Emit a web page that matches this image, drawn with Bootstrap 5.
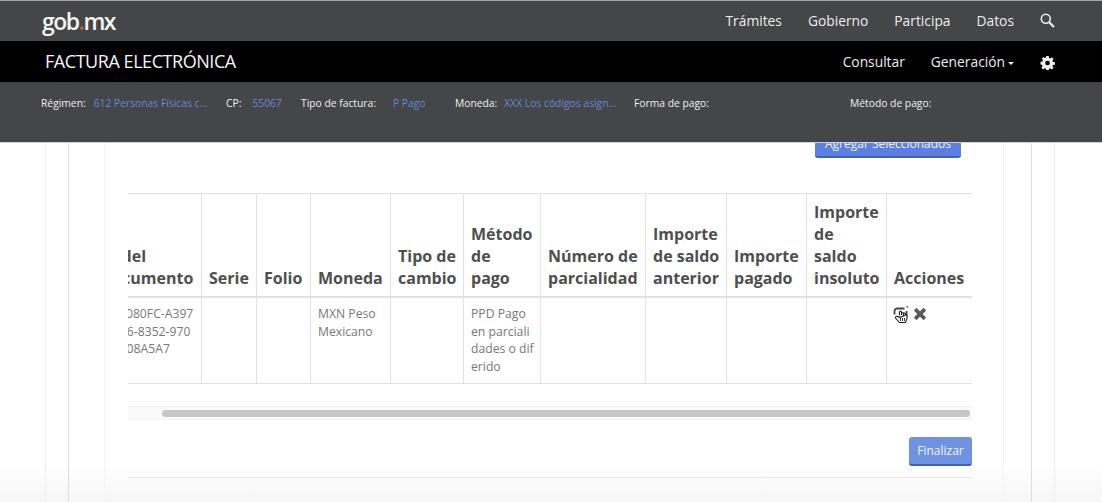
<!DOCTYPE html>
<html lang="es">
<head>
  <meta charset="UTF-8">
  <title>Factura electrónica</title>
  <link href="https://cdn.jsdelivr.net/npm/bootstrap@5.3.3/dist/css/bootstrap.min.css" rel="stylesheet">
  <style>
    html, body { height: 502px; overflow: hidden; }
    body { font-family: "Open Sans", sans-serif; color: #777; background: linear-gradient(#fff 465px, #f6f6f6 502px); }
    a { text-decoration: none; }

    /* cabecera fija */
    .cabecera { position: fixed; top: 0; left: 0; right: 0; z-index: 10; }
    .barra-gob { height: 41px; background: #444648; border-top: 1px solid #a4a4a4; padding: 0 47px 0 42px; }
    .barra-gob .logo-gob { font-size: 23px; font-weight: 600; letter-spacing: -1.5px; color: #f4f4f4; line-height: 40px; }
    .logo-gob i { color: #c8584f; font-style: normal; }
    .barra-gob a, .barra-app a { color: #eee; font-size: 13.8px; }
    .menu-cab { gap: 26px; }
    .icono-busca { margin-top: -2px; }
    .barra-app { height: 41px; background: #000; padding: 0 47px 0 45px; }
    .barra-app a { padding-top: 2px; }
    .titulo-app { color: #f6f6f6; font-size: 18px; letter-spacing: -.45px; }
    .caret-gen { display: inline-block; border-top: 3px solid #eee; border-left: 3px solid transparent; border-right: 3px solid transparent; vertical-align: middle; margin-left: 3px; }
    .barra-datos { height: 61px; background: #444648; border-bottom: 1px solid #cfcfcf; padding: 13px 0 0 41px; font-size: 10.3px; line-height: 16px; }
    .barra-datos b { color: #f0f0f0; font-weight: 400; margin-right: 8px; }
    .barra-datos span { color: #6189dc; }
    .dato-1 { width: 185px; }
    .dato-2 { width: 75px; }
    .dato-3 { width: 154px; }
    .dato-4 { width: 179px; }
    .dato-5 { width: 216px; }
    .dato-3 b { margin-right: 17px; }
    .dato-2 b { margin-right: 11px; }
    .dato-4 b { margin-right: 7px; }

    /* marcos del fondo */
    .marco-1 { margin: 0 47px 0 45px; height: 502px; border-left: 1px solid #eee; border-right: 1px solid #eee; padding: 0 22px; }
    .marco-2 { height: 100%; border-left: 1px solid #ddd; border-right: 1px solid #ddd; padding: 0 0 0 35px; }
    .marco-3 { height: 100%; margin-right: 27px; border-left: 1px solid #f4f4f4; border-right: 1px solid #f4f4f4; padding: 129px 31px 0 23px; }

    .btn-azul { background: #6389e2; color: #f2f5fc; border: 0; border-bottom: 2px solid #3f62b5; border-radius: 3px; font-size: 12px; }
    .btn-azul:hover { background: #5279d8; color: #fff; }
    .btn-agregar { height: 29px; width: 146px; margin-right: 11px; padding: 3px 0 0; background: #5b80e2; }
    .btn-finalizar { height: 29px; width: 63px; padding: 0; background: #6f92e2; }

    .tabla-scroll { overflow: hidden; margin-top: 35px; width: 844px; }
    .tabla-uuid { table-layout: fixed; width: 878px; margin: 0 0 0 -34px; font-size: 12.2px; line-height: 17.6px; color: #777; border-color: #e2e2e2; }
    .tabla-uuid th { font-size: 16px; line-height: 22px; font-weight: 700; color: #4e4e4e; vertical-align: bottom; padding: 7px; border-bottom: 2px solid #e2e2e2; }
    .tabla-uuid td { padding: 7px 7px 8px; color: #777; }
    .tabla-uuid th:nth-child(1) { width: 107px; }
    .tabla-uuid th:nth-child(2) { width: 55px; }
    .tabla-uuid th:nth-child(3) { width: 54px; }
    .tabla-uuid th:nth-child(4) { width: 80px; }
    .tabla-uuid th:nth-child(5) { width: 73px; }
    .tabla-uuid th:nth-child(6) { width: 77px; }
    .tabla-uuid th:nth-child(7) { width: 105px; }
    .tabla-uuid th:nth-child(8) { width: 81px; }
    .tabla-uuid th:nth-child(9) { width: 80px; }
    .tabla-uuid th:nth-child(10) { width: 80px; }
    .tabla-uuid th:nth-child(11) { width: 86px; }
    .tabla-uuid .corta-todo { word-break: break-all; padding-right: 6px; }
    .tabla-uuid .celda-uuid { padding-left: 10px; white-space: nowrap; }
    .sin-corte { white-space: nowrap; }
    .acciones { gap: 3px; margin-left: -1px; }
    .icono-borrar { margin-top: 2px; }

    .riel { width: 844px; height: 14px; margin-top: 22px; background: #fafafa; border-top: 1px solid #f2f2f2; border-bottom: 1px solid #f2f2f2; padding: 3px 2px 0 34px; }
    .riel div { height: 7px; background: #c6c6c6; border-radius: 4px; }
    .pie-tabla { width: 844px; margin-top: 17px; padding-bottom: 11px; border-bottom: 1px solid #e9e9e9; }
  </style>
</head>
<body>
  <header class="cabecera">
    <div class="barra-gob d-flex align-items-center justify-content-between">
      <a class="logo-gob" href="#">gob<i>.</i>mx</a>
      <div class="d-flex align-items-center menu-cab">
        <a href="#">Trámites</a>
        <a href="#">Gobierno</a>
        <a href="#">Participa</a>
        <a href="#">Datos</a>
        <a href="#" aria-label="Buscar" class="icono-busca">
          <svg class="d-block" width="15" height="15" viewBox="0 0 15 15" fill="none" stroke="#eee"><circle cx="5.8" cy="5.8" r="4.5" stroke-width="1.6"/><path d="M9.2 9.2 14 14" stroke-width="2.2"/></svg>
        </a>
      </div>
    </div>
    <div class="barra-app d-flex align-items-center justify-content-between">
      <span class="titulo-app">FACTURA ELECTRÓNICA</span>
      <div class="d-flex align-items-center menu-cab">
        <a href="#">Consultar</a>
        <a href="#">Generación<span class="caret-gen"></span></a>
        <a href="#" aria-label="Ajustes">
          <svg class="d-block" width="15" height="14" viewBox="0 0 16 16" fill="#eee"><path fill-rule="evenodd" d="M6.6 0h2.800l.4 2.300 1.300.6 1.900-1.400 2 2-1.400 1.900.6 1.300 2.300.4v2.800l-2.300.4-.6 1.300 1.400 1.900-2 2-1.900-1.400-1.300.6-.4 2.300H6.600l-.4-2.300-1.300-.6-1.900 1.400-2-2 1.400-1.900-.6-1.300L0 9.400V6.600l2.300-.4.6-1.300L1.500 3l2-2 1.400 1.400 1.300-.6zM8 5.300a2.700 2.700 0 1 0 0 5.400 2.700 2.700 0 0 0 0-5.400z"/></svg>
        </a>
      </div>
    </div>
    <div class="barra-datos d-flex">
      <div class="dato-1"><b>Régimen:</b><span>612 Personas Físicas c...</span></div>
      <div class="dato-2"><b>CP:</b><span>55067</span></div>
      <div class="dato-3"><b>Tipo de factura:</b><span>P Pago</span></div>
      <div class="dato-4"><b>Moneda:</b><span>XXX Los códigos asign...</span></div>
      <div class="dato-5"><b>Forma de pago:</b></div>
      <div><b>Método de pago:</b></div>
    </div>
  </header>

  <div class="marco-1">
    <div class="marco-2">
      <div class="marco-3">
        <div class="d-flex justify-content-end">
          <button class="btn btn-azul btn-agregar" type="button">Agregar Seleccionados</button>
        </div>

        <div class="tabla-scroll">
          <table class="table table-bordered tabla-uuid">
            <thead>
              <tr>
                <th>Id del documento</th>
                <th>Serie</th>
                <th>Folio</th>
                <th>Moneda</th>
                <th>Tipo de cambio</th>
                <th>Método de pago</th>
                <th>Número de parcialidad</th>
                <th>Importe <span class="sin-corte">de saldo</span> anterior</th>
                <th>Importe pagado</th>
                <th>Importe de saldo insoluto</th>
                <th>Acciones</th>
              </tr>
            </thead>
            <tbody>
              <tr>
                <td class="celda-uuid">CF5080FC-A397<br>4B46-8352-970<br>C0108A5A7</td>
                <td></td>
                <td></td>
                <td>MXN Peso Mexicano</td>
                <td></td>
                <td class="corta-todo">PPD Pago en parcialidades o diferido</td>
                <td></td>
                <td></td>
                <td></td>
                <td></td>
                <td>
                  <div class="d-flex acciones">
                    <svg width="17" height="20" viewBox="0 0 17 20" fill="none" stroke="#444">
                      <path d="M3.500 3.500h8M3.500 3.500a3 3 0 0 0-2 3v3M13.500 6v5a4 4 0 0 1-1.500 3.500" stroke-width="1.800"/>
                      <path d="M13.500 2.500l1.500-1.200" stroke-width="1.800" stroke="#888"/>
                      <path d="M6.500 10.500V7a1 1 0 0 1 2 0v3M8.500 8.500a1 1 0 0 1 2 0v2M10.500 9a1 1 0 0 1 2 0v1.500M12.500 10a1 1 0 0 1 1.500 0v3.500l-1.500 4H6.500L2.500 13c-.5-1.500 1.500-2.500 4-.5z" fill="#fff" stroke="#222" stroke-width="1.100"/>
                      <path d="M7.500 13v3M9.500 13v3M11.500 13v3" stroke="#222" stroke-width=".9"/>
                    </svg>
                    <svg class="icono-borrar" width="14" height="14" viewBox="0 0 13 13" stroke="#5a5a5a" stroke-width="3.400"><path d="M2 2l9 9M11 2l-9 9"/></svg>
                  </div>
                </td>
              </tr>
            </tbody>
          </table>
        </div>

        <div class="riel"><div></div></div>

        <div class="pie-tabla d-flex justify-content-end">
          <button class="btn btn-azul btn-finalizar" type="button">Finalizar</button>
        </div>
      </div>
    </div>
  </div>

  <script src="https://cdn.jsdelivr.net/npm/bootstrap@5.3.3/dist/js/bootstrap.bundle.min.js"></script>
</body>
</html>
